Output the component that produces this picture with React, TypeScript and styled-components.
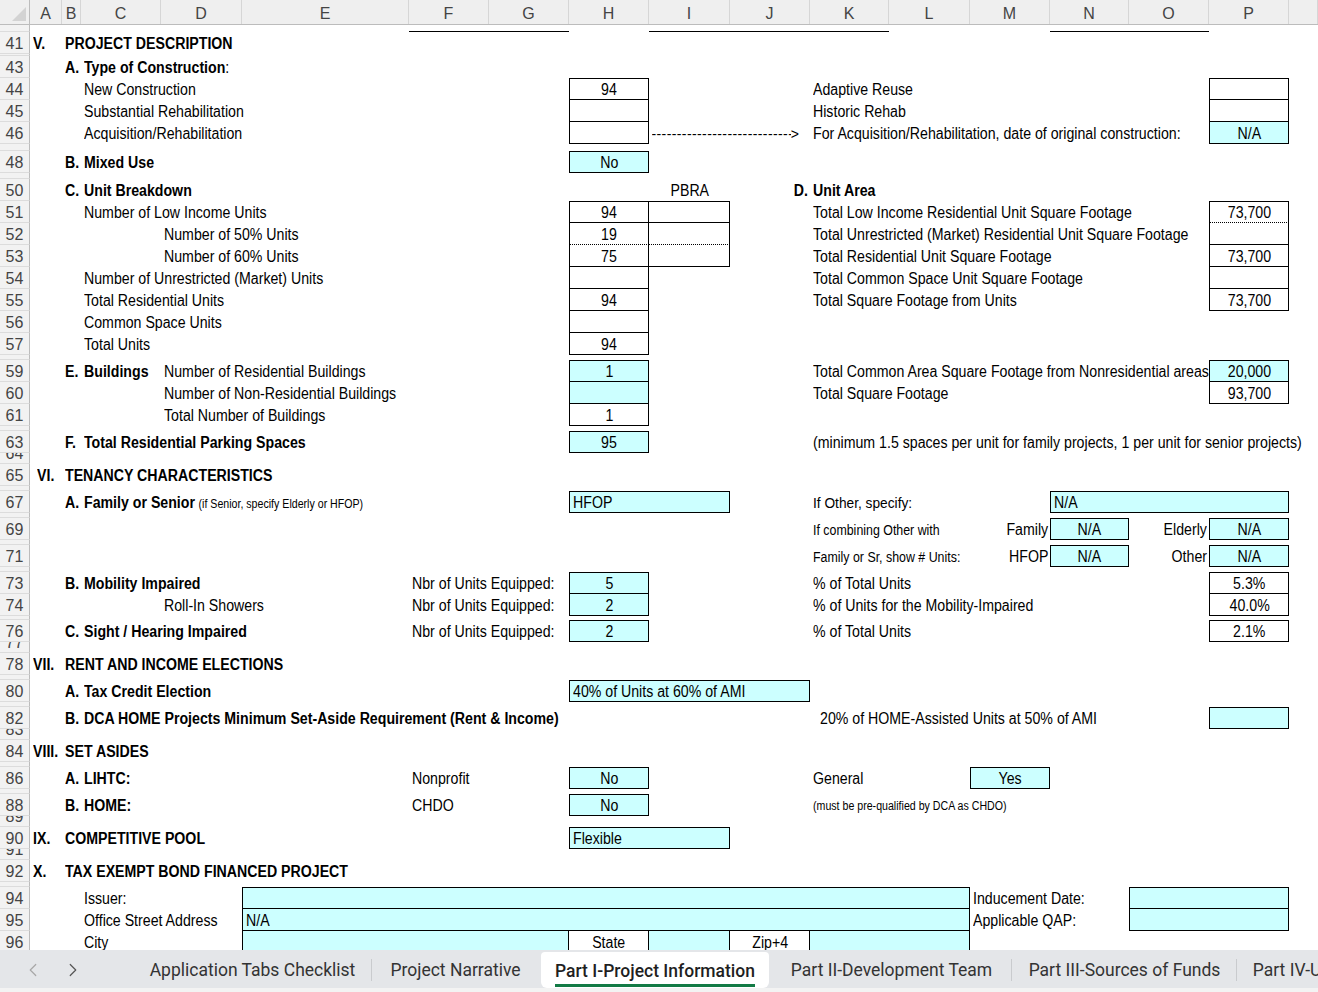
import React from 'react'
import styled, { createGlobalStyle, css } from 'styled-components'
import { ChevronLeft, ChevronRight } from 'lucide-react'

const GlobalStyle = createGlobalStyle`
  html, body {
    margin: 0;
    padding: 0;
    background: #fff;
    overflow: hidden;
  }
  body {
    font-family: "Liberation Sans", Arial, sans-serif;
  }
`

const COLS = ['A', 'B', 'C', 'D', 'E', 'F', 'G', 'H', 'I', 'J', 'K', 'L', 'M', 'N', 'O', 'P', 'Q']
const TEMPLATE = '30px 32px 19px 80px 81px 167px 80px 80px 80px 81px 80px 79px 81px 80px 79px 80px 80px 29px'

const Screen = styled.div`
    width: 1318px;
    height: 992px;
    display: flex;
    flex-direction: column;
    overflow: hidden;
`

const Sheet = styled.div`
    flex: 1;
    overflow: hidden;
    display: flex;
    flex-direction: column;
`

const ColumnHeader = styled.div`
    display: grid;
    grid-template-columns: ${TEMPLATE};
    height: 25px;
    flex: none;
    background: #efefef;
    border-bottom: 1px solid #bcbcbc;
    box-sizing: border-box;
`

const HeadCell = styled.div`
    display: flex;
    align-items: center;
    justify-content: center;
    padding-top: 4px;
    font-size: 16px;
    color: #444;
    border-right: 1px solid #d6d6d6;
    box-sizing: border-box;
`

const Corner = styled.div`
    position: relative;
    border-right: 1px solid #bcbcbc;
    box-sizing: border-box;
`

const Row = styled.div<{ $h: number }>`
    display: grid;
    grid-template-columns: ${TEMPLATE};
    height: ${({ $h }) => $h}px;
    flex: none;
`

const RowNum = styled.div`
    grid-column: 1;
    grid-row: 1;
    display: flex;
    align-items: flex-end;
    justify-content: center;
    overflow: hidden;
    background: #f2f2f2;
    border-right: 1px solid #bcbcbc;
    border-bottom: 1px solid #dcdcdc;
    box-sizing: border-box;
    font-size: 16px;
    line-height: 19px;
    color: #444;
`

type CellProps = {
    $col: number
    $span: number
    $align: 'l' | 'c' | 'r'
    $bold?: boolean
    $box?: 'w' | 'c'
    $noTop?: boolean
    $noLeft?: boolean
    $dotted?: boolean
    $size?: number
    $indent?: number
    $rule?: boolean
}

const Cell = styled.div<CellProps>`
    grid-column: ${({ $col, $span }) => `${$col} / span ${$span}`};
    grid-row: 1;
    display: flex;
    align-items: center;
    justify-content: ${({ $align }) => ($align === 'c' ? 'center' : $align === 'r' ? 'flex-end' : 'flex-start')};
    padding: 2px 2px 0 ${({ $indent }) => 2.5 + ($indent || 0)}px;
    box-sizing: border-box;
    white-space: nowrap;
    min-width: 0;
    font-size: ${({ $size }) => $size || 16}px;
    font-weight: ${({ $bold }) => ($bold ? 700 : 400)};
    color: #000;
    ${({ $rule }) => $rule && css`
        border-bottom: 1px solid #000;
    `}
    ${({ $box, $noTop, $noLeft, $dotted }) => $box && css`
        overflow: hidden;
        background: ${$box === 'c' ? '#ccffff' : '#fff'};
        border: 1px solid #000;
        border-top-width: ${$noTop ? 0 : 1}px;
        border-left-width: ${$noLeft ? 0 : 1}px;
        border-bottom-style: ${$dotted ? 'dotted' : 'solid'};
    `}
`

/* the sheet is set in Arial Narrow; Liberation Sans squeezed to its width */
const Narrow = styled.span<{ $origin: string }>`
    display: inline-block;
    flex: none;
    transform: scaleX(0.885);
    transform-origin: ${({ $origin }) => $origin} center;
`

const Strong = styled.span`
    font-weight: 700;
`

const Note = styled.span`
    font-size: 12px;
    font-weight: 400;
    margin-left: 4px;
`

const Arrow = styled.div`
    display: flex;
    align-items: center;
    width: 100%;
    overflow: hidden;
    padding-right: 9px;
    font-size: 14px;
`

const Dashes = styled.span`
    flex: 1;
    overflow: hidden;
    letter-spacing: 0.4px;
`

const TabBar = styled.div`
    flex: none;
    height: 38px;
    display: flex;
    background: #e4e6e9;
    font-family: Roboto, "Noto Sans", sans-serif;
    font-size: 17.5px;
    color: #333;
`

const Strip = styled.div`
    flex: none;
    height: 4px;
    background: #f3f3f3;
`

const Nav = styled.div`
    width: 133px;
    flex: none;
    display: flex;
    align-items: center;
    padding: 2px 0 0 22px;
    gap: 18px;
    box-sizing: border-box;
`

const NavButton = styled.span<{ $dim?: boolean }>`
    display: flex;
    color: ${({ $dim }) => ($dim ? '#a7a7a7' : '#555')};
`

const Tab = styled.div<{ $w: number; $active?: boolean; $sep?: boolean }>`
    position: relative;
    width: ${({ $w }) => $w}px;
    flex: none;
    display: flex;
    align-items: center;
    justify-content: center;
    white-space: nowrap;
    box-sizing: border-box;
    ${({ $active }) => $active && css`
        background: #fff;
        margin: 2px 2px 0;
        border-radius: 4px 4px 6px 6px;
        color: #1f1f1f;
        font-weight: 500;
    `}
    ${({ $sep }) => $sep && css`
        &::after {
            content: '';
            position: absolute;
            right: 0;
            top: 9px;
            bottom: 7px;
            width: 1px;
            background: #c9cbce;
        }
    `}
`

const TabLabel = styled.span<{ $active?: boolean }>`
    padding-top: 4px;
    border-bottom: 3px solid ${({ $active }) => ($active ? '#137a45' : 'transparent')};
    line-height: 26px;
`

type Spec = {
    c: string
    s?: number
    t?: React.ReactNode
    al?: 'l' | 'c' | 'r'
    b?: boolean
    box?: 'w' | 'c'
    nt?: boolean
    nl?: boolean
    dot?: boolean
    fs?: number
    ind?: number
    kind?: 'arrow' | 'rule'
}

type RowSpec = { n: number; h: number; cells?: Spec[] }

const NBR = 'Nbr of Units Equipped:'

const rows: RowSpec[] = [
    { n: 40, h: 7, cells: [{ c: 'F', s: 2, kind: 'rule' }, { c: 'I', s: 3, kind: 'rule' }, { c: 'N', s: 2, kind: 'rule' }] },
    { n: 41, h: 22, cells: [{ c: 'A', t: 'V.', b: true }, { c: 'B', t: 'PROJECT DESCRIPTION', b: true }] },
    { n: 42, h: 2 },
    { n: 43, h: 22, cells: [{ c: 'B', t: 'A.', b: true }, { c: 'C', t: <span><Strong>Type of Construction</Strong>:</span> }] },
    { n: 44, h: 22, cells: [
        { c: 'C', t: 'New Construction' },
        { c: 'H', box: 'w', t: '94' },
        { c: 'K', t: 'Adaptive Reuse' },
        { c: 'P', box: 'w' },
    ] },
    { n: 45, h: 22, cells: [
        { c: 'C', t: 'Substantial Rehabilitation' },
        { c: 'H', box: 'w', nt: true },
        { c: 'K', t: 'Historic Rehab' },
        { c: 'P', box: 'w', nt: true },
    ] },
    { n: 46, h: 22, cells: [
        { c: 'C', t: 'Acquisition/Rehabilitation' },
        { c: 'H', box: 'w', nt: true },
        { c: 'I', s: 2, kind: 'arrow' },
        { c: 'K', t: 'For Acquisition/Rehabilitation, date of original construction:' },
        { c: 'P', box: 'c', nt: true, t: 'N/A' },
    ] },
    { n: 47, h: 7 },
    { n: 48, h: 22, cells: [{ c: 'B', t: 'B.', b: true }, { c: 'C', t: 'Mixed Use', b: true }, { c: 'H', box: 'c', t: 'No' }] },
    { n: 49, h: 6 },
    { n: 50, h: 22, cells: [
        { c: 'B', t: 'C.', b: true },
        { c: 'C', t: 'Unit Breakdown', b: true },
        { c: 'I', t: 'PBRA', al: 'c' },
        { c: 'J', t: 'D.', b: true, al: 'r' },
        { c: 'K', t: 'Unit Area', b: true },
    ] },
    { n: 51, h: 22, cells: [
        { c: 'C', t: 'Number of Low Income Units' },
        { c: 'H', box: 'w', t: '94' },
        { c: 'I', box: 'w', nl: true },
        { c: 'K', t: 'Total Low Income Residential Unit Square Footage' },
        { c: 'P', box: 'w', t: '73,700', dot: true },
    ] },
    { n: 52, h: 22, cells: [
        { c: 'D', t: 'Number of 50% Units' },
        { c: 'H', box: 'w', t: '19', nt: true, dot: true },
        { c: 'I', box: 'w', nt: true, nl: true, dot: true },
        { c: 'K', t: 'Total Unrestricted (Market) Residential Unit Square Footage' },
        { c: 'P', box: 'w', nt: true },
    ] },
    { n: 53, h: 22, cells: [
        { c: 'D', t: 'Number of 60% Units' },
        { c: 'H', box: 'w', t: '75', nt: true },
        { c: 'I', box: 'w', nt: true, nl: true },
        { c: 'K', t: 'Total Residential Unit Square Footage' },
        { c: 'P', box: 'w', t: '73,700', nt: true },
    ] },
    { n: 54, h: 22, cells: [
        { c: 'C', t: 'Number of Unrestricted (Market) Units' },
        { c: 'H', box: 'w', nt: true },
        { c: 'K', t: 'Total Common Space Unit Square Footage' },
        { c: 'P', box: 'w', nt: true },
    ] },
    { n: 55, h: 22, cells: [
        { c: 'C', t: 'Total Residential Units' },
        { c: 'H', box: 'w', t: '94', nt: true },
        { c: 'K', t: 'Total Square Footage from Units' },
        { c: 'P', box: 'w', t: '73,700', nt: true },
    ] },
    { n: 56, h: 22, cells: [{ c: 'C', t: 'Common Space Units' }, { c: 'H', box: 'w', nt: true }] },
    { n: 57, h: 22, cells: [{ c: 'C', t: 'Total Units' }, { c: 'H', box: 'w', t: '94', nt: true }] },
    { n: 58, h: 5 },
    { n: 59, h: 22, cells: [
        { c: 'B', t: 'E.', b: true },
        { c: 'C', t: 'Buildings', b: true },
        { c: 'D', t: 'Number of Residential Buildings' },
        { c: 'H', box: 'c', t: '1' },
        { c: 'K', t: 'Total Common Area Square Footage from Nonresidential areas' },
        { c: 'P', box: 'c', t: '20,000' },
    ] },
    { n: 60, h: 22, cells: [
        { c: 'D', t: 'Number of Non-Residential Buildings' },
        { c: 'H', box: 'c', nt: true },
        { c: 'K', t: 'Total Square Footage' },
        { c: 'P', box: 'w', t: '93,700', nt: true },
    ] },
    { n: 61, h: 22, cells: [{ c: 'D', t: 'Total Number of Buildings' }, { c: 'H', box: 'w', t: '1', nt: true }] },
    { n: 62, h: 5 },
    { n: 63, h: 22, cells: [
        { c: 'B', t: 'F.', b: true },
        { c: 'C', t: 'Total Residential Parking Spaces', b: true },
        { c: 'H', box: 'c', t: '95' },
        { c: 'K', t: '(minimum 1.5 spaces per unit for family projects, 1 per unit for senior projects)' },
    ] },
    { n: 64, h: 11 },
    { n: 65, h: 22, cells: [{ c: 'A', t: 'VI.', b: true, ind: 4 }, { c: 'B', t: 'TENANCY CHARACTERISTICS', b: true }] },
    { n: 66, h: 5 },
    { n: 67, h: 22, cells: [
        { c: 'B', t: 'A.', b: true },
        { c: 'C', t: <span><Strong>Family or Senior</Strong><Note>(if Senior, specify Elderly or HFOP)</Note></span> },
        { c: 'H', s: 2, box: 'c', t: 'HFOP', al: 'l' },
        { c: 'K', t: 'If Other, specify:', fs: 15.5 },
        { c: 'N', s: 3, box: 'c', t: 'N/A', al: 'l' },
    ] },
    { n: 68, h: 5 },
    { n: 69, h: 22, cells: [
        { c: 'K', t: 'If combining Other with', fs: 14 },
        { c: 'M', t: 'Family', al: 'r' },
        { c: 'N', box: 'c', t: 'N/A' },
        { c: 'O', t: 'Elderly', al: 'r' },
        { c: 'P', box: 'c', t: 'N/A' },
    ] },
    { n: 70, h: 5 },
    { n: 71, h: 22, cells: [
        { c: 'K', t: 'Family or Sr, show # Units:', fs: 14 },
        { c: 'M', t: 'HFOP', al: 'r' },
        { c: 'N', box: 'c', t: 'N/A' },
        { c: 'O', t: 'Other', al: 'r' },
        { c: 'P', box: 'c', t: 'N/A' },
    ] },
    { n: 72, h: 5 },
    { n: 73, h: 22, cells: [
        { c: 'B', t: 'B.', b: true },
        { c: 'C', t: 'Mobility Impaired', b: true },
        { c: 'F', t: NBR },
        { c: 'H', box: 'c', t: '5' },
        { c: 'K', t: '% of Total Units' },
        { c: 'P', box: 'w', t: '5.3%' },
    ] },
    { n: 74, h: 22, cells: [
        { c: 'D', t: 'Roll-In Showers' },
        { c: 'F', t: NBR },
        { c: 'H', box: 'c', t: '2', nt: true },
        { c: 'K', t: '% of Units for the Mobility-Impaired' },
        { c: 'P', box: 'w', t: '40.0%', nt: true },
    ] },
    { n: 75, h: 4 },
    { n: 76, h: 22, cells: [
        { c: 'B', t: 'C.', b: true },
        { c: 'C', t: 'Sight / Hearing Impaired', b: true },
        { c: 'F', t: NBR },
        { c: 'H', box: 'c', t: '2' },
        { c: 'K', t: '% of Total Units' },
        { c: 'P', box: 'w', t: '2.1%' },
    ] },
    { n: 77, h: 11 },
    { n: 78, h: 22, cells: [{ c: 'A', t: 'VII.', b: true }, { c: 'B', t: 'RENT AND INCOME ELECTIONS', b: true }] },
    { n: 79, h: 5 },
    { n: 80, h: 22, cells: [
        { c: 'B', t: 'A.', b: true },
        { c: 'C', t: 'Tax Credit Election', b: true },
        { c: 'H', s: 3, box: 'c', t: '40% of Units at 60% of AMI', al: 'l' },
    ] },
    { n: 81, h: 5 },
    { n: 82, h: 22, cells: [
        { c: 'B', t: 'B.', b: true },
        { c: 'C', t: 'DCA HOME Projects Minimum Set-Aside Requirement (Rent & Income)', b: true },
        { c: 'K', t: '20% of HOME-Assisted Units at 50% of AMI', ind: 7 },
        { c: 'P', box: 'c' },
    ] },
    { n: 83, h: 11 },
    { n: 84, h: 22, cells: [{ c: 'A', t: 'VIII.', b: true }, { c: 'B', t: 'SET ASIDES', b: true }] },
    { n: 85, h: 5 },
    { n: 86, h: 22, cells: [
        { c: 'B', t: 'A.', b: true },
        { c: 'C', t: 'LIHTC:', b: true },
        { c: 'F', t: 'Nonprofit' },
        { c: 'H', box: 'c', t: 'No' },
        { c: 'K', t: 'General' },
        { c: 'M', box: 'c', t: 'Yes' },
    ] },
    { n: 87, h: 5 },
    { n: 88, h: 22, cells: [
        { c: 'B', t: 'B.', b: true },
        { c: 'C', t: 'HOME:', b: true },
        { c: 'F', t: 'CHDO' },
        { c: 'H', box: 'c', t: 'No' },
        { c: 'K', t: '(must be pre-qualified by DCA as CHDO)', fs: 12 },
    ] },
    { n: 89, h: 11 },
    { n: 90, h: 22, cells: [
        { c: 'A', t: 'IX.', b: true },
        { c: 'B', t: 'COMPETITIVE POOL', b: true },
        { c: 'H', s: 2, box: 'c', t: 'Flexible', al: 'l' },
    ] },
    { n: 91, h: 11 },
    { n: 92, h: 22, cells: [{ c: 'A', t: 'X.', b: true }, { c: 'B', t: 'TAX EXEMPT BOND FINANCED PROJECT', b: true }] },
    { n: 93, h: 5 },
    { n: 94, h: 22, cells: [
        { c: 'C', t: 'Issuer:' },
        { c: 'E', s: 8, box: 'c' },
        { c: 'M', t: 'Inducement Date:' },
        { c: 'O', s: 2, box: 'c' },
    ] },
    { n: 95, h: 22, cells: [
        { c: 'C', t: 'Office Street Address' },
        { c: 'E', s: 8, box: 'c', t: 'N/A', al: 'l', nt: true },
        { c: 'M', t: 'Applicable QAP:' },
        { c: 'O', s: 2, box: 'c', nt: true },
    ] },
    { n: 96, h: 22, cells: [
        { c: 'C', t: 'City' },
        { c: 'E', s: 3, box: 'c', nt: true },
        { c: 'H', box: 'w', t: 'State', nt: true, nl: true },
        { c: 'I', box: 'c', nt: true, nl: true },
        { c: 'J', box: 'w', t: 'Zip+4', nt: true, nl: true },
        { c: 'K', s: 2, box: 'c', nt: true, nl: true },
    ] },
]

const tabs = [
    { label: 'Application Tabs Checklist', w: 239, sep: true },
    { label: 'Project Narrative', w: 167 },
    { label: 'Part I-Project Information', w: 228, active: true },
    { label: 'Part II-Development Team', w: 241, sep: true },
    { label: 'Part III-Sources of Funds', w: 225, sep: true },
    { label: 'Part IV-Uses of Funds', w: 200 },
]

const ORIGIN = { l: 'left', c: 'center', r: 'right' }

const SheetCell = ({ spec }: { spec: Spec }) => {
    const col = COLS.indexOf(spec.c) + 2
    const align = spec.al || (spec.box ? 'c' : 'l')
    return (
        <Cell
            $col={col}
            $span={spec.s || 1}
            $align={align}
            $bold={spec.b}
            $box={spec.box}
            $noTop={spec.nt}
            $noLeft={spec.nl}
            $dotted={spec.dot}
            $size={spec.fs}
            $indent={spec.ind}
            $rule={spec.kind === 'rule'}
        >
            {spec.kind === 'arrow' ? (
                <Arrow>
                    <Dashes>{'-'.repeat(60)}</Dashes>
                    <span>&gt;</span>
                </Arrow>
            ) : spec.t ? (
                <Narrow $origin={ORIGIN[align]}>{spec.t}</Narrow>
            ) : null}
        </Cell>
    )
}

export default function App() {
    return (
        <Screen>
            <GlobalStyle />
            <Sheet>
                <ColumnHeader>
                    <Corner>
                        <svg width="14" height="14" viewBox="0 0 14 14" style={{ position: 'absolute', right: 3, bottom: 3 }}>
                            <polygon points="14,0 14,14 0,14" fill="#d3d3d3" />
                        </svg>
                    </Corner>
                    {COLS.map((c) => (
                        <HeadCell key={c}>{c === 'Q' ? '' : c}</HeadCell>
                    ))}
                </ColumnHeader>
                {rows.map((r) => (
                    <Row key={r.n} $h={r.h}>
                        <RowNum>{r.h >= 10 ? r.n : ''}</RowNum>
                        {(r.cells || []).map((spec, i) => (
                            <SheetCell key={i} spec={spec} />
                        ))}
                    </Row>
                ))}
            </Sheet>
            <TabBar>
                <Nav>
                    <NavButton $dim>
                        <ChevronLeft size={22} strokeWidth={1.3} />
                    </NavButton>
                    <NavButton>
                        <ChevronRight size={22} strokeWidth={1.3} />
                    </NavButton>
                </Nav>
                {tabs.map((t) => (
                    <Tab key={t.label} $w={t.w} $active={t.active} $sep={t.sep}>
                        <TabLabel $active={t.active}>{t.label}</TabLabel>
                    </Tab>
                ))}
            </TabBar>
            <Strip />
        </Screen>
    )
}
